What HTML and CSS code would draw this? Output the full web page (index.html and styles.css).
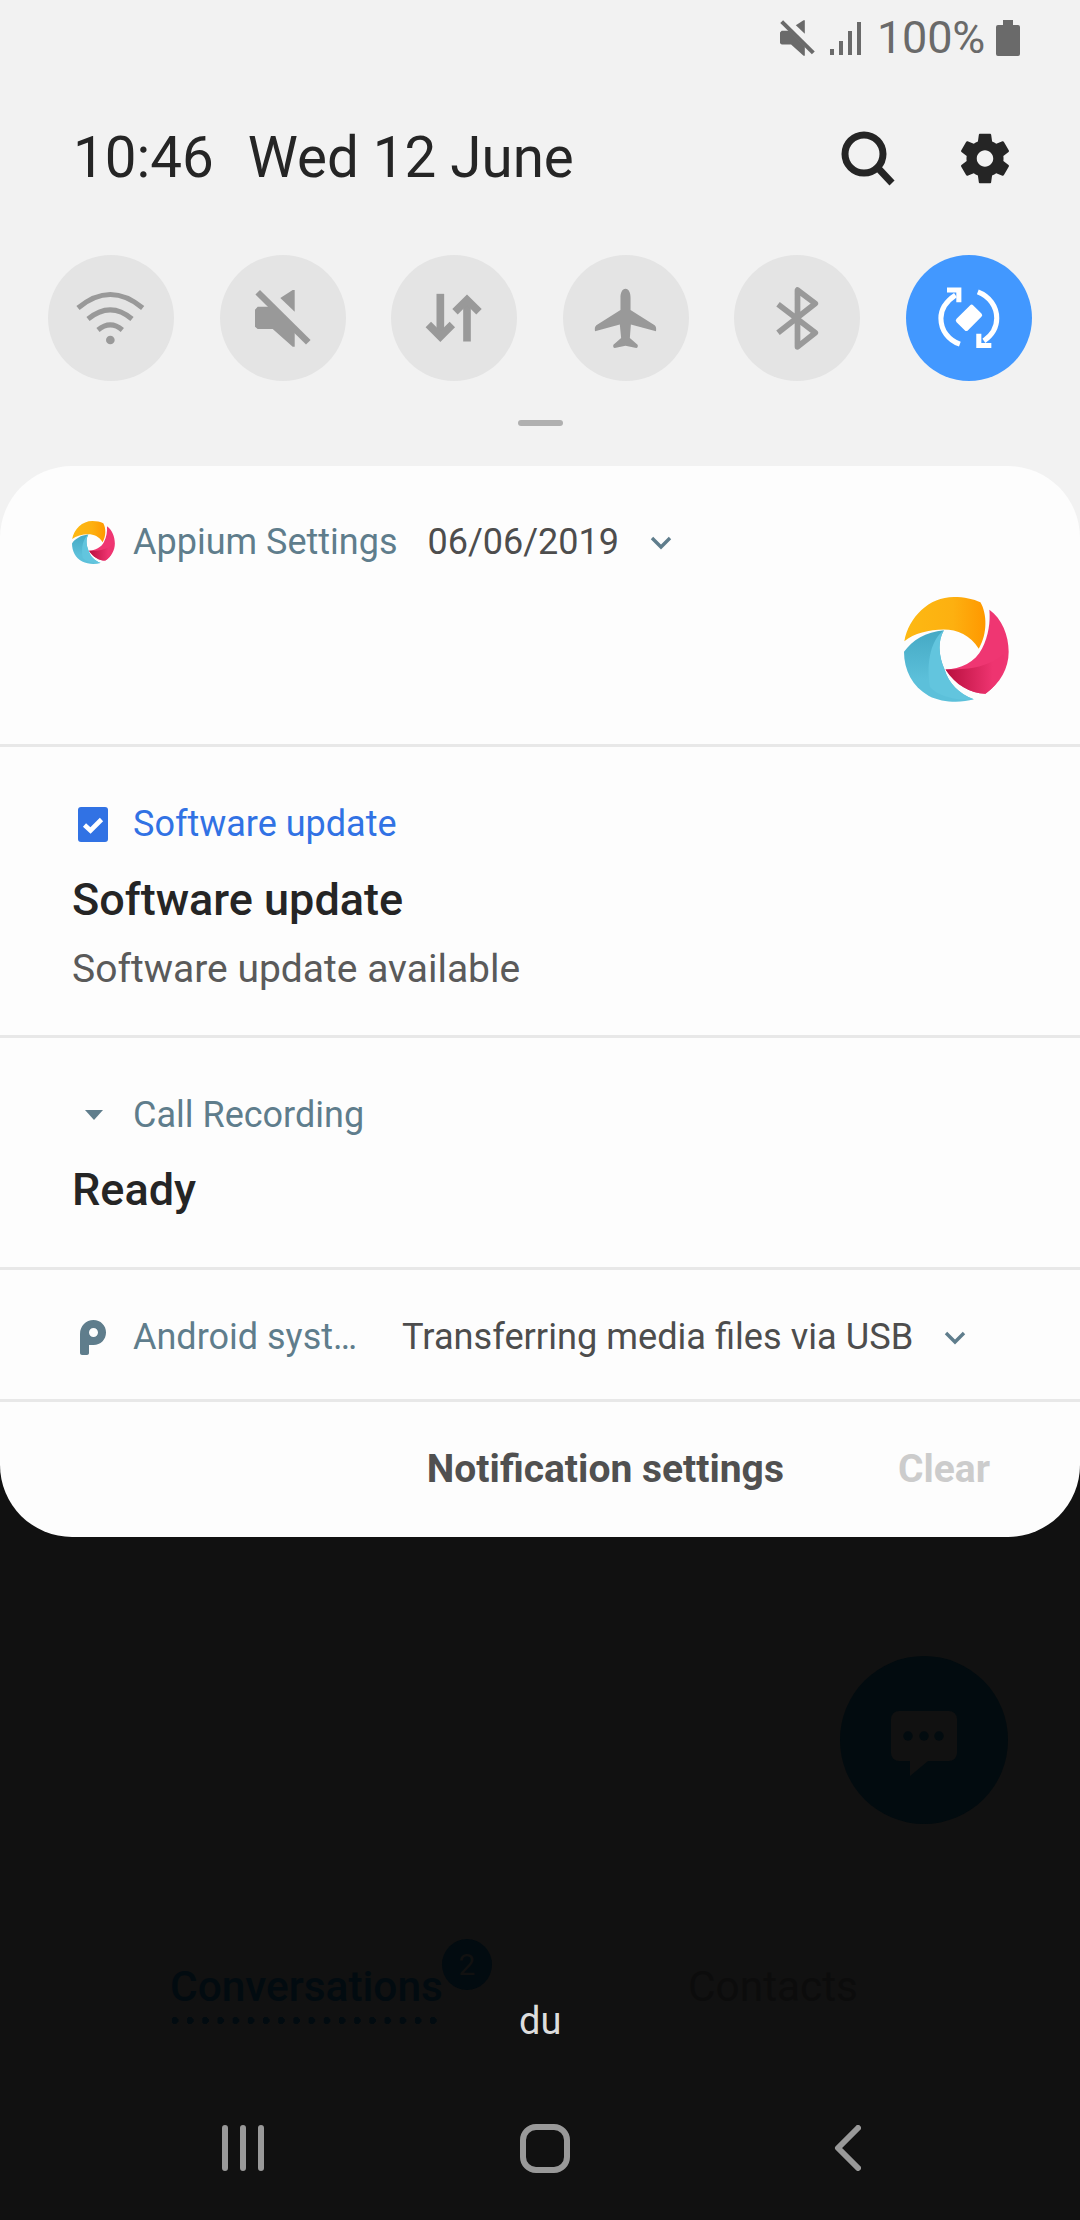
FILE: index.html
```html
<!DOCTYPE html>
<html lang="en">
<head>
<meta charset="utf-8">
<title>Notification shade</title>
<link rel="stylesheet" href="styles.css">
</head>
<body>
<svg class="defs" width="0" height="0" aria-hidden="true">
  <defs>
    <linearGradient id="gy" x1="0" x2="1" y1="0" y2="0"><stop offset="0" stop-color="#fdb913"/><stop offset=".6" stop-color="#fdb010"/><stop offset="1" stop-color="#ff9800"/></linearGradient>
    <linearGradient id="gp" x1="0" x2="1" y1="0" y2="0"><stop offset="0" stop-color="#b80f3e"/><stop offset=".8" stop-color="#ee3470"/></linearGradient>
    <linearGradient id="gb" x1="0" x2="0" y1="0" y2="1"><stop offset="0" stop-color="#45a9c4"/><stop offset=".7" stop-color="#5cc0da"/></linearGradient>
    <symbol id="logo" viewBox="100 80 316 316">
      <path fill="url(#gy)" d="M101 213C115 140 175 80 250 80C280 80 310 86 330 96C350 130 352 190 325 236C300 195 260 178 220 178C175 178 130 190 101 213Z"/>
      <path fill="#ef3672" d="M357 118C395 145 415 195 415 245C415 295 390 340 345 371C300 370 255 345 225 298C270 298 315 275 335 235C355 195 360 155 357 118Z"/>
      <path fill="url(#gp)" d="M225 298C270 298 345 300 400 250C410 290 385 345 345 371C300 370 255 345 225 298Z"/>
      <path fill="url(#gb)" d="M220 180C165 185 125 210 100 245C100 300 125 350 175 378C215 398 270 400 310 388C265 370 235 340 222 298C205 260 200 215 220 180Z"/>
      <path fill="#62c5de" d="M220 180C185 205 165 270 178 350C195 375 260 395 310 388C265 370 235 340 222 298C205 260 200 215 220 180Z"/>
    </symbol>
    <symbol id="mute" viewBox="0 0 56 57">
      <path d="M2.7 16.7H14.3L39.7 42V56.7H37.7L17.7 39H2.7L0 36.7V19.7Z"/>
      <path d="M25.3 8L37.7 0H39.7V21.7Z"/>
      <path d="M2.7 2.3L53.3 52.3" fill="none" stroke="currentColor" stroke-width="6.5"/>
    </symbol>
    <symbol id="chev" viewBox="0 0 22 16">
      <path d="M2 3L11 12L20 3" fill="none" stroke="currentColor" stroke-width="3.4"/>
    </symbol>
  </defs>
</svg>

<header class="status">
  <svg class="st-mute"><use href="#mute"/></svg>
  <svg class="st-signal" viewBox="0 0 32 34"><path d="M0 28h4v6H0zM9 20h4v14H9zM18 10h4v24h-4zM27 1h4v33h-4z"/></svg>
  <span class="st-text">100%</span>
  <svg class="st-batt" viewBox="0 0 24 36"><path d="M7 0h10v5h5a2 2 0 0 1 2 2v27a2 2 0 0 1-2 2H2a2 2 0 0 1-2-2V7a2 2 0 0 1 2-2h5z"/></svg>
</header>

<section class="clock-row">
  <span class="clock">10:46</span>
  <span class="date">Wed 12 June</span>
  <svg class="search" viewBox="0 0 56 56"><circle cx="24" cy="24" r="19" fill="none" stroke="#252525" stroke-width="7"/><path d="M37 37L52 53" stroke="#252525" stroke-width="7" fill="none"/></svg>
  <svg class="gear" viewBox="2.4 1.7 19.2 20.6"><path fill-rule="evenodd" stroke-linejoin="round" d="M19.14 12.94c.04-.3.06-.61.06-.94 0-.32-.02-.64-.07-.94l2.03-1.58c.18-.14.23-.41.12-.61l-1.92-3.32c-.12-.22-.37-.29-.59-.22l-2.39.96c-.5-.38-1.03-.7-1.62-.94l-.36-2.54c-.04-.24-.24-.41-.48-.41h-3.84c-.24 0-.43.17-.47.41l-.36 2.54c-.59.24-1.13.57-1.62.94l-2.39-.96c-.22-.08-.47 0-.59.22L2.74 8.87c-.12.21-.08.47.12.61l2.03 1.58c-.05.3-.09.63-.09.94s.02.64.07.94l-2.03 1.58c-.18.14-.23.41-.12.61l1.92 3.32c.12.22.37.29.59.22l2.39-.96c.5.38 1.03.7 1.62.94l.36 2.54c.05.24.24.41.48.41h3.84c.24 0 .44-.17.47-.41l.36-2.54c.59-.24 1.13-.56 1.62-.94l2.39.96c.22.08.47 0 .59-.22l1.92-3.32c.12-.22.07-.47-.12-.61l-2.01-1.58zM12 15.2c-1.77 0-3.2-1.43-3.2-3.2s1.43-3.2 3.2-3.2 3.2 1.43 3.2 3.2-1.43 3.2-3.2 3.2z" fill="#252525"/></svg>
</section>

<nav class="toggles">
  <div class="toggle">
    <svg class="ic-wifi" viewBox="140 150 210 165"><g fill="none" stroke="#999" stroke-width="15"><path d="M146 201Q243 120 340 201"/><path d="M176 234Q243 179 308 234"/><path d="M206 267Q243 236 279 267"/></g><circle cx="243" cy="297" r="13" fill="#999"/></svg>
  </div>
  <div class="toggle"><svg class="ic-mute"><use href="#mute"/></svg></div>
  <div class="toggle">
    <svg class="ic-data" viewBox="1180 155 180 155"><g fill="none" stroke="#999" stroke-width="23"><path d="M1229 160V285"/><path d="M1193 252L1229 288L1265 252"/><path d="M1309 303V180"/><path d="M1273 214L1309 178L1345 214"/></g></svg>
  </div>
  <div class="toggle">
    <svg class="ic-plane" viewBox="128 141 188 182"><path fill="#999" d="M222 143C212 143 207 155 207 170L207 207L135 252C130 256 130 262 131 270L205 250L209 290L186 310C184 314 186 320 190 320L222 313L254 320C258 320 260 314 258 310L235 290L238 250L313 270C314 262 314 256 309 252L237 207L237 170C237 155 232 143 222 143Z"/></svg>
  </div>
  <div class="toggle">
    <svg class="ic-bt" viewBox="662 136 140 193"><path fill="none" stroke="#999" stroke-width="17" stroke-linejoin="round" d="M674 275L785 188L732 148V317L785 275L674 190"/></svg>
  </div>
  <div class="toggle toggle-on">
    <svg class="ic-rot" viewBox="1140 135 200 195">
      <g fill="none" stroke="#fff" stroke-width="15">
        <path d="M1200 165C1170 185 1157 210 1157 233C1157 270 1180 298 1213 310"/>
        <path d="M1266 155C1300 168 1322 198 1322 233C1322 260 1308 283 1284 300"/>
        <path d="M1175 150H1210V186"/>
        <path d="M1269 279V314H1306"/>
      </g>
      <rect x="1205" y="208" width="70" height="48" rx="7" transform="rotate(-45 1240 232)" fill="#fff"/>
    </svg>
  </div>
</nav>

<div class="handle"></div>

<div class="card-wrap">
  <main class="card">
    <article class="note note-appium">
      <div class="note-head">
        <span class="head-icon"><svg class="logo-small"><use href="#logo"/></svg></span>
        <span class="app">Appium Settings</span>
        <span class="meta date-meta">06/06/2019</span>
        <svg class="chev"><use href="#chev"/></svg>
      </div>
      <div class="large-wrap"><svg class="logo-large"><use href="#logo"/></svg></div>
    </article>

    <article class="note note-update">
      <div class="note-head">
        <span class="head-icon"><svg class="ic-check" viewBox="0 0 30 35"><rect width="30" height="35" rx="3" fill="#3172e4"/><path d="M6.5 18L12.500 23.500L23.500 12.500" fill="none" stroke="#fff" stroke-width="4.600"/></svg></span>
        <span class="app app-blue">Software update</span>
      </div>
      <h2 class="title title-update">Software update</h2>
      <p class="sub">Software update available</p>
    </article>

    <article class="note note-call">
      <div class="note-head">
        <span class="head-icon"><svg class="ic-tri" viewBox="0 0 18 10"><path d="M0 0H18L9 10Z"/></svg></span>
        <span class="app">Call Recording</span>
      </div>
      <h2 class="title title-call">Ready</h2>
    </article>

    <article class="note note-usb">
      <div class="note-head">
        <span class="head-icon"><svg class="ic-p" viewBox="0 0 26 35"><path fill-rule="evenodd" d="M0 14C0 6 6 0 13.500 0C20.500 0 26 5.500 26 12.500C26 19.500 20.500 25 13.500 25H9V33C9 34 8 35 7 35H2C1 35 0 34 0 33ZM9 12.500C9 15 11 17 13.500 17C16 17 18 15 18 12.500C18 10 16 8 13.500 8C11 8 9 10 9 12.500Z"/></svg></span>
        <span class="app app-trunc">Android syst…</span>
        <span class="meta usb-meta">Transferring media files via USB</span>
        <svg class="chev"><use href="#chev"/></svg>
      </div>
    </article>

    <footer class="note-foot">
      <span class="foot-link">Notification settings</span>
      <span class="foot-clear">Clear</span>
    </footer>
  </main>
</div>

<section class="behind">
  <div class="fab">
    <svg class="ic-chat" viewBox="0 0 66 65"><path fill="#111" d="M8 0H58A8 8 0 0 1 66 8V42A8 8 0 0 1 58 50H37L19 65V50H8A8 8 0 0 1 0 42V8A8 8 0 0 1 8 0Z"/><g fill="#020b0f"><circle cx="17" cy="25" r="4.700"/><circle cx="33" cy="25" r="4.700"/><circle cx="48" cy="25" r="4.700"/></g></svg>
  </div>
  <div class="tabs">
    <div class="tab tab-active">Conversations<span class="badge">2</span></div>
    <div class="tab tab-plain">Contacts</div>
    <div class="toast">du</div>
  </div>
  <div class="navbar">
    <div class="nav-cell"><svg class="nav-recents" viewBox="0 0 42 46"><path d="M3 3V43M21 3V43M39 3V43" fill="none" stroke="#999" stroke-width="6" stroke-linecap="round"/></svg></div>
    <div class="nav-cell"><svg class="nav-home" viewBox="0 0 50 49"><rect x="3" y="3" width="44" height="43" rx="13" fill="none" stroke="#999" stroke-width="6"/></svg></div>
    <div class="nav-cell"><svg class="nav-back" viewBox="0 0 27 46"><path d="M24 3L4 23L24 43" fill="none" stroke="#999" stroke-width="6" stroke-linecap="round" stroke-linejoin="round"/></svg></div>
  </div>
</section>
</body>
</html>
```

FILE: styles.css
```css
* { box-sizing: border-box; }
html, body { margin: 0; padding: 0; }
body {
  width: 1080px;
  height: 2220px;
  overflow: hidden;
  background: #f2f2f2;
  font-family: Roboto, "Liberation Sans", sans-serif;
  display: flex;
  flex-direction: column;
}
.defs { position: absolute; }
svg { display: block; flex: none; }

.status {
  height: 75px;
  display: flex;
  align-items: center;
  justify-content: flex-end;
  padding-right: 60px;
  color: #6a6a6a;
  fill: #6a6a6a;
}
.st-mute { width: 35px; height: 36px; margin-right: 15px; }
.st-signal { width: 32px; height: 34px; margin-right: 15px; }
.st-text { font-size: 45px; line-height: 50px; letter-spacing: -.2px; }
.st-batt { width: 24px; height: 36px; margin-left: 11px; }

.clock-row {
  height: 166px;
  display: flex;
  align-items: center;
  padding-left: 73px;
  color: #252525;
  font-size: 56.5px;
}
.clock { margin-right: 34px; }
.date { margin-right: auto; }
.search { width: 56px; height: 56px; margin-right: 64px; }
.gear { width: 50px; height: 53px; margin-right: 70px; }

.toggles {
  margin-top: 14px;
  padding: 0 48px;
  display: flex;
  justify-content: space-between;
}
.toggle {
  width: 126px;
  height: 126px;
  border-radius: 50%;
  background: #e4e4e4;
  display: flex;
  align-items: center;
  justify-content: center;
}
.toggle-on { background: #4298ff; }
.ic-wifi { width: 70px; height: 55px; }
.ic-mute { width: 56px; height: 57px; fill: #999; color: #999; }
.ic-data { width: 60px; height: 52px; }
.ic-plane { width: 63px; height: 61px; }
.ic-bt { width: 47px; height: 65px; }
.ic-rot { width: 68px; height: 66px; }

.handle {
  width: 45px;
  height: 6px;
  margin: 39px auto 0;
  border-radius: 3px;
  background: #b0b0b0;
}

.card-wrap {
  margin-top: 40px;
  background: linear-gradient(#f2f2f2 0 50%, #111 50% 100%);
}
.card {
  height: 1071px;
  background: #fdfdfd;
  border-radius: 72px;
  overflow: hidden;
}
.note { padding-left: 72px; border-bottom: 3px solid #e8e8e8; }
.note-appium { padding-top: 56px; height: 281px; }
.note-update { padding-top: 57px; height: 291px; }
.note-call { padding-top: 57px; height: 232px; }
.note-usb { padding-top: 47px; height: 132px; }

.note-head {
  height: 40px;
  display: flex;
  align-items: center;
  font-size: 36px;
  line-height: 40px;
}
.head-icon {
  width: 61px;
  height: 40px;
  display: flex;
  align-items: center;
}
.logo-small { width: 43px; height: 43px; flex: none; }
.ic-check { width: 30px; height: 35px; margin-left: 6px; }
.ic-tri { width: 18px; height: 10px; margin-left: 13px; fill: #5f7d8c; }
.ic-p { width: 26px; height: 35px; margin-left: 8px; fill: #5f7d8c; }
.app { color: #5f7d8c; }
.app-blue { color: #3172e4; }
.meta { color: #4d4d4d; }
.date-meta { margin-left: 30px; }
.usb-meta { margin-left: 45px; font-size: 36.2px; }
.chev { width: 22px; height: 16px; color: #5f7d8c; margin-left: 31px; margin-top: 2px; }
.large-wrap { display: flex; justify-content: flex-end; padding: 35px 71px 0 0; }
.logo-large { width: 105px; height: 105px; }

.title {
  margin: 0;
  font-size: 45px;
  line-height: 50px;
  font-weight: 500;
  color: #252525;
}
.title-update { margin-top: 31px; }
.title-call { margin-top: 30px; }
.sub {
  margin: 22px 0 0;
  font-size: 39px;
  line-height: 44px;
  color: #5a5a5a;
}

.note-foot {
  padding-top: 42px;
  padding-right: 90px;
  display: flex;
  justify-content: flex-end;
  font-size: 39px;
  line-height: 50px;
  font-weight: 700;
}
.foot-link { color: #505050; margin-right: 114px; }
.foot-clear { color: #cccccc; }

.behind {
  flex: 1;
  background: #111;
  display: flex;
  flex-direction: column;
}
.fab {
  width: 168px;
  height: 168px;
  margin: 119px 72px 0 auto;
  border-radius: 50%;
  background: #020b0f;
  display: flex;
  align-items: center;
  justify-content: center;
}
.ic-chat { width: 66px; height: 65px; margin-top: 6px; }

.tabs {
  position: relative;
  margin-top: 138px;
  height: 60px;
  padding: 0 222px 0 170px;
  display: flex;
  justify-content: space-between;
  font-size: 42.400px;
  line-height: 50px;
}
.tab { color: #0c0c0c; }
.tab-active {
  position: relative;
  height: 62px;
  font-weight: 500;
  color: #020b10;
  background: radial-gradient(circle 3.5px at 5px 3.5px, #020b10 99%, transparent) left bottom / 15.2px 7px repeat-x;
}
.badge {
  position: absolute;
  left: 272px;
  top: -23px;
  width: 50px;
  height: 51px;
  border-radius: 50%;
  background: #020b10;
  color: #111;
  font-size: 30px;
  font-weight: 400;
  line-height: 51px;
  text-align: center;
}
.toast {
  position: absolute;
  left: 519px;
  top: 37px;
  color: #dddddd;
  font-size: 38px;
  line-height: 44px;
}

.navbar {
  margin-top: 101px;
  padding-left: 92px;
  display: grid;
  grid-template-columns: repeat(3, 302px);
  align-items: center;
}
.nav-cell { display: flex; justify-content: center; align-items: center; height: 50px; }
.nav-recents { width: 42px; height: 46px; }
.nav-home { width: 50px; height: 49px; }
.nav-back { width: 27px; height: 46px; }
```
